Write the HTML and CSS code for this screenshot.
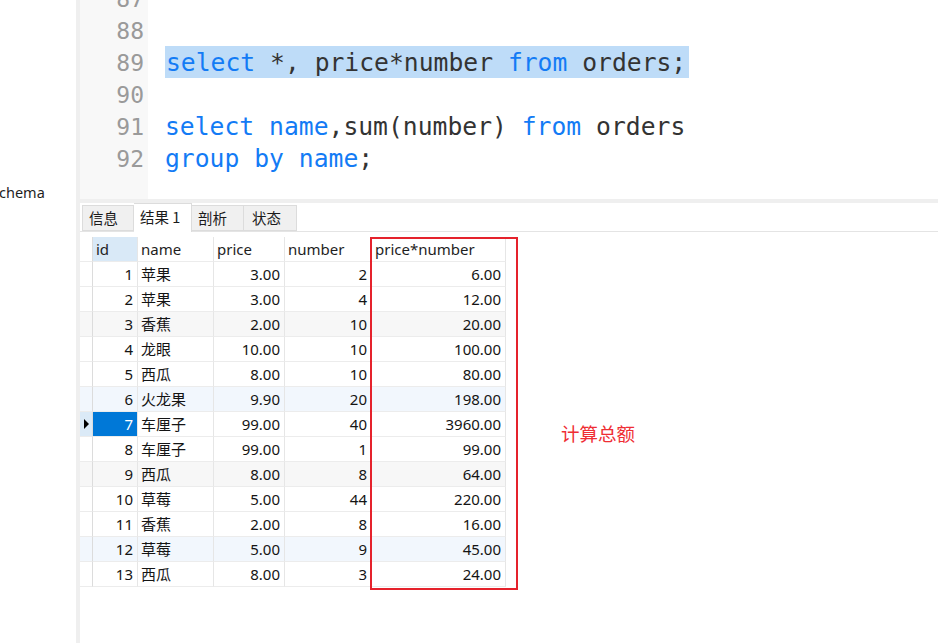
FILE: index.html
```html
<!DOCTYPE html>
<html lang="zh">
<head>
<meta charset="utf-8">
<title>Query</title>
<link rel="stylesheet" href="styles.css">
</head>
<body>
<div class="app">
  <aside class="nav">
    <div class="nav-item">chema</div>
  </aside>
  <div class="divider"></div>
  <main class="main">
    <section class="editor">
      <div class="gutter">
        <div class="ln">87</div>
        <div class="ln">88</div>
        <div class="ln">89</div>
        <div class="ln">90</div>
        <div class="ln">91</div>
        <div class="ln">92</div>
      </div>
      <div class="code">
        <div class="line"></div>
        <div class="line"></div>
        <div class="line"><span class="sel"><span class="kw">select</span> *, price*number <span class="kw">from</span> orders;</span></div>
        <div class="line"></div>
        <div class="line"><span class="kw">select</span> <span class="kw">name</span>,sum(number) <span class="kw">from</span> orders</div>
        <div class="line"><span class="kw">group</span> <span class="kw">by</span> <span class="kw">name</span>;</div>
      </div>
    </section>
    <div class="split"></div>
    <section class="results">
      <div class="tabs">
        <div class="tab">信息</div>
        <div class="tab active">结果 1</div>
        <div class="tab">剖析</div>
        <div class="tab">状态</div>
      </div>
      <div class="grid-wrap">
        <div class="grid">
          <div class="rh"></div><div class="hd cur">id</div><div class="hd">name</div><div class="hd">price</div><div class="hd">number</div><div class="hd">price*number</div>

          <div class="rh"></div><div class="c num">1</div><div class="c">苹果</div><div class="c num">3.00</div><div class="c num">2</div><div class="c num">6.00</div>
          <div class="rh"></div><div class="c num">2</div><div class="c">苹果</div><div class="c num">3.00</div><div class="c num">4</div><div class="c num">12.00</div>
          <div class="rh g"></div><div class="c num g">3</div><div class="c g">香蕉</div><div class="c num g">2.00</div><div class="c num g">10</div><div class="c num g">20.00</div>
          <div class="rh"></div><div class="c num">4</div><div class="c">龙眼</div><div class="c num">10.00</div><div class="c num">10</div><div class="c num">100.00</div>
          <div class="rh"></div><div class="c num">5</div><div class="c">西瓜</div><div class="c num">8.00</div><div class="c num">10</div><div class="c num">80.00</div>
          <div class="rh b"></div><div class="c num b">6</div><div class="c b">火龙果</div><div class="c num b">9.90</div><div class="c num b">20</div><div class="c num b">198.00</div>
          <div class="rh curr"><span class="arrow"></span></div><div class="c num selcell">7</div><div class="c">车厘子</div><div class="c num">99.00</div><div class="c num">40</div><div class="c num">3960.00</div>
          <div class="rh"></div><div class="c num">8</div><div class="c">车厘子</div><div class="c num">99.00</div><div class="c num">1</div><div class="c num">99.00</div>
          <div class="rh g"></div><div class="c num g">9</div><div class="c g">西瓜</div><div class="c num g">8.00</div><div class="c num g">8</div><div class="c num g">64.00</div>
          <div class="rh"></div><div class="c num">10</div><div class="c">草莓</div><div class="c num">5.00</div><div class="c num">44</div><div class="c num">220.00</div>
          <div class="rh"></div><div class="c num">11</div><div class="c">香蕉</div><div class="c num">2.00</div><div class="c num">8</div><div class="c num">16.00</div>
          <div class="rh b"></div><div class="c num b">12</div><div class="c b">草莓</div><div class="c num b">5.00</div><div class="c num b">9</div><div class="c num b">45.00</div>
          <div class="rh"></div><div class="c num">13</div><div class="c">西瓜</div><div class="c num">8.00</div><div class="c num">3</div><div class="c num">24.00</div>
        </div>
        <div class="mark"></div>
        <div class="note">计算总额</div>
      </div>
    </section>
  </main>
</div>
</body>
</html>
```

FILE: styles.css
```css
html, body {
  margin: 0;
  padding: 0;
  background: #fff;
}
body {
  width: 938px;
  height: 643px;
  overflow: hidden;
  font-family: "Noto Sans", "Noto Sans CJK SC", sans-serif;
}
.app {
  display: flex;
  height: 643px;
}
.nav {
  width: 76px;
  flex: none;
  background: #fff;
  overflow: hidden;
}
.nav-item {
  margin-top: 182px;
  margin-left: -1px;
  font-size: 14.5px;
  line-height: 20px;
  color: #1e1e1e;
  white-space: nowrap;
}
.divider {
  width: 4px;
  flex: none;
  background: #efefef;
}
.main {
  flex: 1;
  display: flex;
  flex-direction: column;
  min-width: 0;
}
.editor {
  height: 199px;
  display: flex;
  overflow: hidden;
  font-family: "DejaVu Sans Mono", monospace;
  font-size: 24.7px;
}
.gutter {
  width: 68px;
  flex: none;
  background: #f8f8f8;
  margin-top: -17px;
  padding-right: 4px;
  box-sizing: border-box;
}
.ln {
  height: 32px;
  line-height: 32px;
  text-align: right;
  color: #9a9a9a;
  font-size: 23px;
}
.code {
  flex: 1;
  margin-top: -18px;
  padding-left: 17px;
}
.line {
  height: 32px;
  line-height: 34px;
  color: #333;
  white-space: pre;
}
.sel {
  display: inline-block;
  background: #bedcf8;
  padding: 0 3px 0 1px;
  height: 32px;
  vertical-align: top;
}
.kw {
  color: #137bf5;
}
.split {
  height: 4px;
  background: #efefef;
}
.results {
  flex: 1;
  display: flex;
  flex-direction: column;
}
.tabs {
  height: 29px;
  display: flex;
  align-items: flex-start;
  padding-left: 2px;
  border-bottom: 1px solid #e4e4e4;
  box-sizing: border-box;
}
.tab {
  margin-top: 2px;
  height: 26px;
  box-sizing: border-box;
  border: 1px solid #dcdcdc;
  border-left: none;
  background: #f0f0f0;
  font-size: 14.5px;
  line-height: 24px;
  padding: 0 6px;
  color: #1a1a1a;
  font-family: "Noto Sans CJK SC", sans-serif;
}
.tab:first-child {
  border-left: 1px solid #dcdcdc;
  width: 52px;
}
.tab:nth-child(3) { width: 52px; }
.tab:nth-child(4) { width: 53px; padding-left: 8px; }
.tab.active {
  margin-top: 0;
  height: 29px;
  background: #fff;
  border-bottom: none;
  width: 58px;
  line-height: 26px;
}
.grid-wrap {
  position: relative;
  margin-top: 5px;
  flex: 1;
}
.grid {
  display: grid;
  grid-template-columns: 13px 45px 76px 71px 87px 134px;
  grid-auto-rows: 25px;
  width: 426px;
  font-size: 15px;
  color: #141414;
}
.grid > div {
  box-sizing: border-box;
  border-right: 1px solid #e6e6e6;
  border-bottom: 1px solid #ececec;
  line-height: 25px;
  padding: 0 3px;
  white-space: nowrap;
  overflow: hidden;
}
.grid > .rh {
  padding: 0;
  border-right: 1px solid #dcdcdc;
  position: relative;
}
.hd {
  color: #1e1e1e;
}
.hd.cur {
  background: #d9e9f7;
}
.num {
  text-align: right;
  padding-right: 4px !important;
}
.c.g, .rh.g { background: #f7f7f7; }
.c.b, .rh.b { background: #f2f7fd; }
.rh.curr { background: #dbeaf7; }
.selcell {
  background: #0078d7;
  color: #fff;
}
.arrow {
  position: absolute;
  left: 4px;
  top: 7px;
  width: 0;
  height: 0;
  border-top: 5px solid transparent;
  border-bottom: 5px solid transparent;
  border-left: 5px solid #000;
}
.mark {
  position: absolute;
  left: 290px;
  top: 0;
  width: 148px;
  height: 353px;
  box-sizing: border-box;
  border: 2px solid #e5222c;
}
.note {
  position: absolute;
  left: 481px;
  top: 183px;
  font-size: 18.5px;
  line-height: 26px;
  color: #ef2e34;
  font-family: "Noto Sans CJK SC", sans-serif;
}
```
